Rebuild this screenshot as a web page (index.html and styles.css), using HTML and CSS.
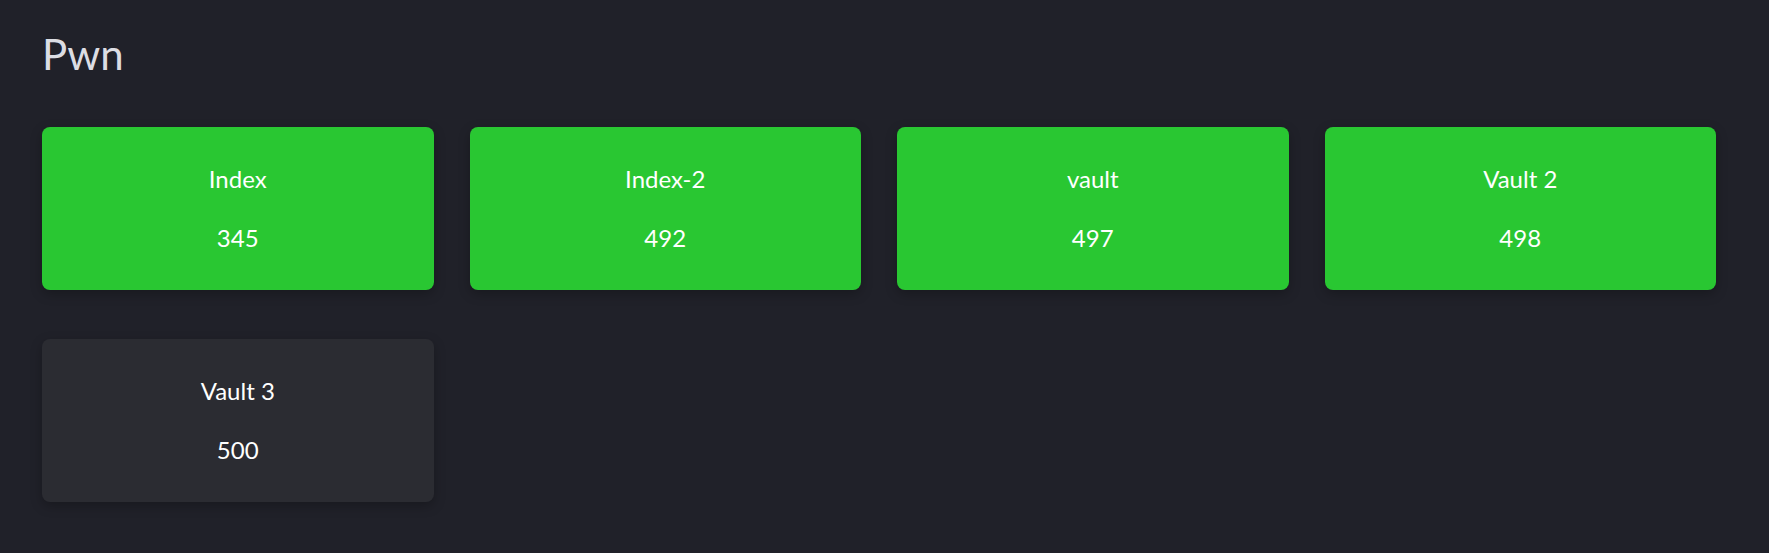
FILE: index.html
```html
<!DOCTYPE html>
<html lang="en">
<head>
<meta charset="utf-8">
<title>Pwn</title>
<link rel="stylesheet" href="styles.css">
</head>
<body>
<main class="page">
  <h1 class="title">Pwn</h1>
  <section class="grid">
    <div class="card done"><div class="name">Index</div><div class="score">345</div></div>
    <div class="card done"><div class="name">Index-2</div><div class="score">492</div></div>
    <div class="card done"><div class="name">vault</div><div class="score">497</div></div>
    <div class="card done"><div class="name">Vault 2</div><div class="score">498</div></div>
    <div class="card"><div class="name">Vault 3</div><div class="score">500</div></div>
  </section>
</main>
</body>
</html>
```

FILE: styles.css
```css
html, body {
  margin: 0;
  padding: 0;
  background: #202129;
  font-family: Lato, "Liberation Sans", sans-serif;
}
.page {
  padding: 26px 53px 40px 42px;
}
.title {
  margin: 0;
  font-size: 42px;
  font-weight: 400;
  line-height: 56px;
  color: #dcdde3;
}
.grid {
  margin-top: 45px;
  display: grid;
  grid-template-columns: repeat(4, 1fr);
  column-gap: 36px;
  row-gap: 49px;
}
.card {
  height: 163px;
  border-radius: 8px;
  background: #2b2c32;
  box-shadow: 0 4px 12px rgba(0, 0, 0, 0.25);
  display: flex;
  flex-direction: column;
  align-items: center;
  justify-content: center;
  gap: 35px;
  color: #ffffff;
  font-size: 24px;
  line-height: 24px;
}
.card.done {
  background: #29c732;
}
```
